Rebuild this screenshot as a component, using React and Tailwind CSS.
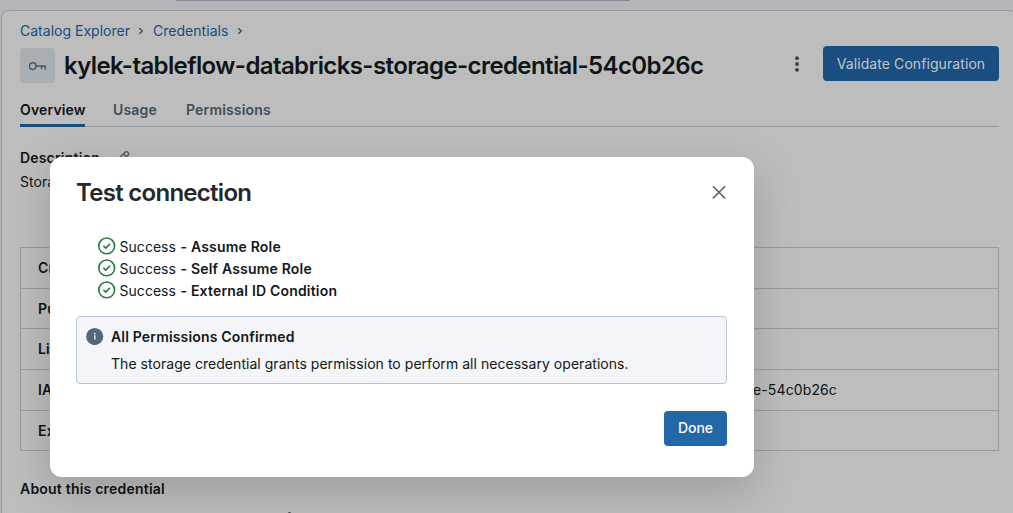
const rows = [
  { label: 'Created at', value: '', height: 'h-[41px]' },
  { label: 'Purpose', value: '', height: 'h-[40px]' },
  { label: 'Limit to read-only use', value: '', height: 'h-[41px]' },
  { label: 'IAM role ARN', value: 'e-54c0b26c', height: 'h-[41px]' },
  { label: 'External ID', value: '', height: 'h-[40px]' },
];

const checks = ['Assume Role', 'Self Assume Role', 'External ID Condition'];

function Chevron() {
  return (
    <svg className="size-2 shrink-0" viewBox="0 0 8 8" fill="none" stroke="#36424d" strokeWidth="1.2">
      <path d="M2.4 1.2 5.3 4 2.4 6.8" />
    </svg>
  );
}

function KeyIcon() {
  return (
    <svg className="h-[18px] w-[18px]" viewBox="0 0 18 18" fill="none" stroke="#4b5966" strokeWidth="1.5">
      <circle cx="3.7" cy="9.1" r="3.3" />
      <path d="M7 9.1H16.2V12.4M12.6 9.1V12" />
    </svg>
  );
}

function PencilIcon() {
  return (
    <svg className="size-4" viewBox="0 0 16 16" fill="none" stroke="#4b5966" strokeWidth="1.4" strokeLinejoin="round">
      <path d="M1.6 9.8 9.3 2.1a1.6 1.6 0 0 1 2.3 0l.6.6a1.6 1.6 0 0 1 0 2.3L4.6 12.6 1 13.2z" />
      <path d="M7.6 4 10.4 6.8" />
    </svg>
  );
}

function CheckIcon() {
  return (
    <svg className="h-[18px] w-[18px] shrink-0" viewBox="0 0 18 18" fill="none" stroke="#277c43" strokeWidth="1.6">
      <circle cx="8.7" cy="8.9" r="7.9" />
      <path d="M5.4 8.9 7.8 11.1 12 6.8" />
    </svg>
  );
}

function InfoIcon() {
  return (
    <svg className="h-[18px] w-[18px] shrink-0" viewBox="0 0 18 18">
      <circle cx="8.7" cy="9.5" r="8.6" fill="#566775" />
      <circle cx="8.8" cy="6.6" r="0.9" fill="#f4f6f8" />
      <rect x="8.2" y="8.3" width="1.3" height="4.3" fill="#f4f6f8" />
    </svg>
  );
}

export default function App() {
  return (
    <div className="relative h-[513px] w-[1013px] overflow-hidden bg-[#b7b5b9] font-['Inter','Liberation_Sans',sans-serif] text-[14px] leading-5 tracking-[0.04px] whitespace-nowrap text-[#0f1417]">
      <div className="ml-[176px] h-[10px] w-[454px]">
        <div className="h-px rounded-b-sm bg-[#808d99]" />
      </div>

      <main className="ml-px h-[520px] w-[1016px] rounded-lg border border-[#949ca4] bg-[#bdbdbd] pl-[18px]">
        <nav className="mt-[10px] flex h-5 items-center text-[#164d7f]">
          <a className="w-[110px] tracking-[0.01px]">Catalog Explorer</a>
          <span className="flex w-[22px] justify-center"><Chevron /></span>
          <a className="ml-px w-[76px] tracking-[0.03px]">Credentials</a>
          <span className="flex w-[22px] justify-center"><Chevron /></span>
        </nav>

        <header className="mt-[5px] flex h-[35px] w-[979px]">
          <div className="mt-[2px] flex size-[35px] items-center justify-center rounded bg-[#a9aeb3]">
            <KeyIcon />
          </div>
          <h1 className="mt-[5px] ml-[9px] text-[24px] leading-[30px] font-semibold tracking-[-0.6px]">
            kylek-tableflow-databricks-storage-credential-54c0b26c
          </h1>
          <div className="ml-auto flex items-center">
            <svg className="mr-[23px] h-4 w-[6px]" viewBox="0 0 6 16" fill="#36424d">
              <circle cx="3" cy="2.2" r="1.9" />
              <circle cx="3" cy="8" r="1.9" />
              <circle cx="3" cy="13.8" r="1.9" />
            </svg>
            <button className="h-[35px] w-[176px] rounded bg-[#1a4e80] tracking-[0.08px] text-[#c0c5ca]">
              Validate Configuration
            </button>
          </div>
        </header>

        <div className="mt-[19px] flex h-[27px] w-[979px] border-b border-[#949ca4] font-semibold tracking-[0.16px] text-[#3f4d59]">
          <span className="h-[27px] w-[65px] border-b-[3px] border-[#174e80] text-[#0f1417]">Overview</span>
          <span className="ml-[28px] w-[44px]">Usage</span>
          <span className="ml-[29px]">Permissions</span>
        </div>

        <div className="mt-[21px] flex h-5 items-center font-semibold tracking-[0.18px]">
          <span className="w-[79px]">Description</span>
          <span className="ml-[17px]"><PencilIcon /></span>
        </div>
        <p className="mt-[4px]">Storage credential</p>

        <div className="mt-[55px] w-[979px] border-x border-t border-[#949ca4]">
          {rows.map((row) => (
            <div key={row.label} className={`${row.height} flex items-center border-b border-[#949ca4] pl-[17px]`}>
              <span className="w-[715px] font-semibold tracking-[0.18px]">{row.label}</span>
              <span className="tracking-[0.12px]">{row.value}</span>
            </div>
          ))}
        </div>

        <h2 className="mt-[28px] font-semibold tracking-[0.21px]">About this credential</h2>
        <div className="mt-[13px] ml-[268px] h-2 w-[3px] rounded-sm bg-[#36424d]" />
      </main>

      <section
        role="dialog"
        className="absolute top-[157px] left-[50px] h-[320px] w-[704px] rounded-xl bg-white px-[26px] pt-[20px] text-[#11171c] shadow-[0_14px_44px_rgba(0,0,0,0.18)]"
      >
        <div className="flex h-8 items-center justify-between">
          <h2 className="text-[24px] leading-8 font-semibold tracking-[-0.72px] text-[#252729]">Test connection</h2>
          <svg className="mr-[1px] mb-[2px] size-[15px]" viewBox="0 0 15 15" fill="none" stroke="#566775" strokeWidth="1.6">
            <path d="M0.9 1.2 13.1 13.4M13.1 1.2 0.9 13.4" />
          </svg>
        </div>

        <ul className="mt-[26px] ml-[22px]">
          {checks.map((check) => (
            <li key={check} className="flex h-[22px] items-center">
              <CheckIcon />
              <span className="ml-[3.5px] w-[61px] pt-[2px]">Success</span>
              <span className="pt-[2px] font-semibold tracking-[0.19px]">- {check}</span>
            </li>
          ))}
        </ul>

        <div className="mt-[15px] flex h-[68px] w-[651px] rounded border border-[#bac7d2] bg-[#f4f5f8] pt-[10px] pl-[9px]">
          <InfoIcon />
          <div className="ml-[7px]">
            <p className="font-semibold tracking-[0.17px]">All Permissions Confirmed</p>
            <p className="mt-[7px]">The storage credential grants permission to perform all necessary operations.</p>
          </div>
        </div>

        <button className="mt-[27px] ml-[588px] h-[35px] w-[63px] rounded bg-[#2268a9] pb-[2px] font-medium tracking-[-0.1px] text-white">
          Done
        </button>
      </section>
    </div>
  );
}
